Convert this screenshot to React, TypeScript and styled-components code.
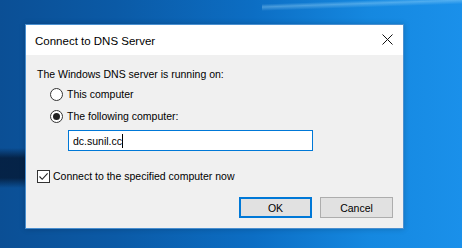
import styled, { createGlobalStyle } from 'styled-components';

const GlobalStyle = createGlobalStyle`
  html, body {
    margin: 0;
    padding: 0;
    background: #ffffff;
  }
  body {
    font-family: 'Liberation Sans', Arial, sans-serif;
    font-size: 10.5px;
    color: #000;
  }
`;

const App = () => {
  return (
    <>
      <GlobalStyle />
      <Desktop>
        <Dialog>
          <TitleBar>
            <Title>Connect to DNS Server</Title>
            <CloseIcon viewBox="0 0 11 11">
              <path d="M0.5 0.5 L10.5 10.5 M10.5 0.5 L0.5 10.5" stroke="#111" strokeWidth="1" />
            </CloseIcon>
          </TitleBar>
          <Body>
            <Label>The Windows DNS server is running on:</Label>
            <OptionList>
              <Option>
                <Radio checked={false} />
                <span>This computer</span>
              </Option>
              <Option>
                <Radio checked={true} />
                <span>The following computer:</span>
              </Option>
            </OptionList>
            <TextField>
              dc.sunil.cc
              <Caret />
            </TextField>
            <CheckRow>
              <CheckBox>
                <svg viewBox="0 0 11 11" width="11" height="11">
                  <path d="M1.5 5.5 L4.2 8.3 L9.6 2.4" fill="none" stroke="#222" strokeWidth="1.1" />
                </svg>
              </CheckBox>
              <span>Connect to the specified computer now</span>
            </CheckRow>
            <ButtonRow>
              <Button primary>OK</Button>
              <Button>Cancel</Button>
            </ButtonRow>
          </Body>
        </Dialog>
      </Desktop>
    </>
  );
};

const Desktop = styled.div`
  width: 462px;
  height: 248px;
  box-sizing: border-box;
  padding: 24px 0 0 25px;
  background:
    linear-gradient(178deg, transparent 0, transparent 4px, rgba(180, 230, 255, 0.35) 7px, transparent 11px) right top / 200px 30px no-repeat,
    linear-gradient(180deg, transparent 148px, rgba(3, 20, 45, 0.75) 158px, rgba(3, 20, 45, 0.75) 178px, transparent 188px) left top / 40px 100% no-repeat,
    linear-gradient(90deg, #0b4f95 0%, #0b5aa6 25%, #0c6ec4 55%, #1588e0 80%, #1a90ea 100%);
`;

const Dialog = styled.div`
  width: 379px;
  height: 205px;
  box-sizing: border-box;
  border: 1px solid #4a8fcf;
  background: #f0f0f0;
  display: flex;
  flex-direction: column;
  box-shadow: 0 0 6px rgba(0, 0, 0, 0.2);
`;

const TitleBar = styled.div`
  height: 30px;
  background: #ffffff;
  display: flex;
  align-items: center;
  justify-content: space-between;
  padding: 0 10px 0 9px;
`;

const Title = styled.div`
  font-size: 11.5px;
  color: #000;
  margin-top: 1px;
`;

const CloseIcon = styled.svg`
  width: 11px;
  height: 11px;
  margin-top: -1px;
`;

const Body = styled.div`
  flex: 1;
  display: flex;
  flex-direction: column;
  padding: 11px 10px 0 11px;
`;

const Label = styled.div`
  line-height: 16px;
`;

const OptionList = styled.div`
  display: flex;
  flex-direction: column;
  gap: 6px;
  margin: 4px 0 0 13px;
`;

const Option = styled.div`
  display: flex;
  align-items: center;
  gap: 4px;
  line-height: 16px;
`;

const Radio = styled.span<{ checked: boolean }>`
  width: 11px;
  height: 11px;
  border: 1px solid #333;
  border-radius: 50%;
  background: #fff;
  display: inline-flex;
  align-items: center;
  justify-content: center;
  &::after {
    content: '';
    width: 7px;
    height: 7px;
    border-radius: 50%;
    background: ${({ checked }) => (checked ? '#222' : 'transparent')};
  }
`;

const TextField = styled.div`
  margin: 6px 0 0 31px;
  width: 245px;
  height: 21px;
  box-sizing: border-box;
  border: 1px solid #0078d7;
  background: #fff;
  display: flex;
  align-items: center;
  padding: 0 0 0 4px;
  line-height: 16px;
`;

const Caret = styled.span`
  width: 1px;
  height: 14px;
  background: #000;
`;

const CheckRow = styled.div`
  display: flex;
  align-items: center;
  gap: 3px;
  margin-top: 17px;
  line-height: 16px;
`;

const CheckBox = styled.span`
  width: 13px;
  height: 13px;
  box-sizing: border-box;
  border: 1px solid #333;
  background: #fff;
  display: inline-flex;
  align-items: center;
  justify-content: center;
`;

const ButtonRow = styled.div`
  display: flex;
  justify-content: flex-end;
  gap: 8px;
  margin-top: 13px;
`;

const Button = styled.button<{ primary?: boolean }>`
  width: 73px;
  height: 21px;
  box-sizing: border-box;
  font-family: inherit;
  font-size: 10.5px;
  color: #000;
  background: #e1e1e1;
  border: ${({ primary }) => (primary ? '2px solid #0078d7' : '1px solid #adadad')};
  padding: 0;
  display: flex;
  align-items: center;
  justify-content: center;
`;

export default App;
